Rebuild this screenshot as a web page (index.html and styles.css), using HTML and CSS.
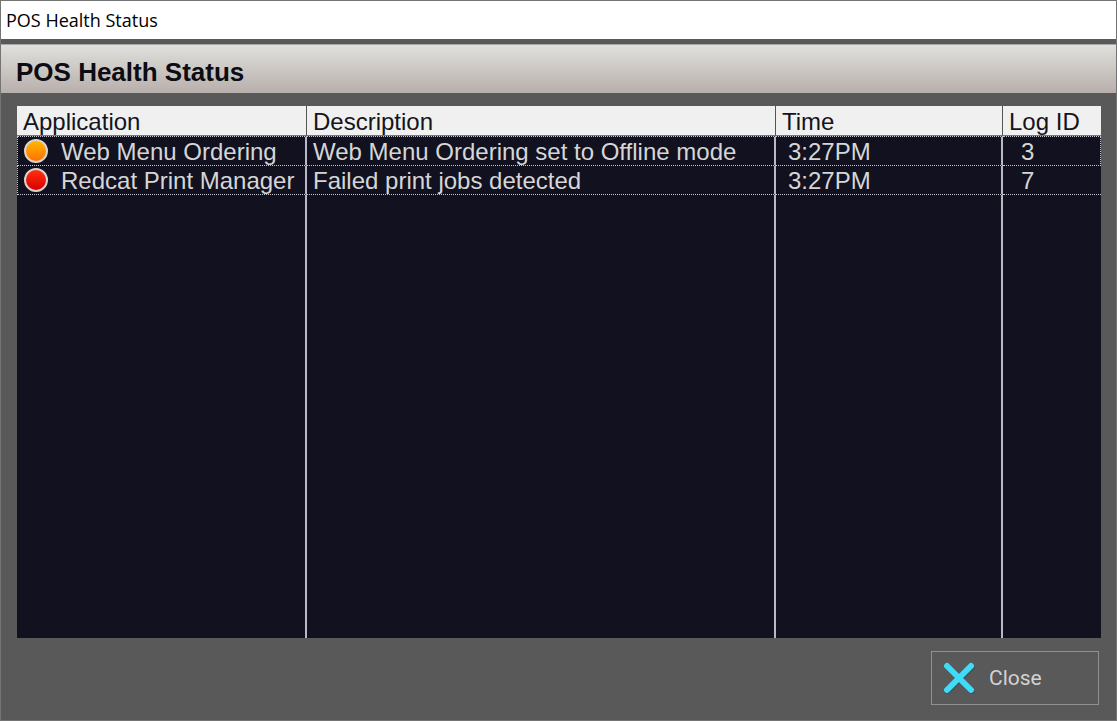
FILE: index.html
```html
<!DOCTYPE html>
<html lang="en">
<head>
  <meta charset="UTF-8">
  <meta name="viewport" content="width=device-width, initial-scale=1.0">
  <title>POS Health Status</title>
  <link rel="stylesheet" href="styles.css">
</head>
<body>
  <div class="window">
    <div class="titlebar">POS Health Status</div>
    <h1 class="heading">POS Health Status</h1>
    <div class="content">
      <table class="log">
        <colgroup>
          <col class="col-app">
          <col class="col-desc">
          <col class="col-time">
          <col class="col-id">
        </colgroup>
        <thead>
          <tr>
            <th scope="col">Application</th>
            <th scope="col">Description</th>
            <th scope="col">Time</th>
            <th scope="col">Log ID</th>
          </tr>
        </thead>
        <tbody>
          <tr class="entry">
            <td><span class="light warning"></span>Web Menu Ordering</td>
            <td>Web Menu Ordering set to Offline mode</td>
            <td class="time">3:27PM</td>
            <td class="log-id">3</td>
          </tr>
          <tr class="entry">
            <td><span class="light error"></span>Redcat Print Manager</td>
            <td>Failed print jobs detected</td>
            <td class="time">3:27PM</td>
            <td class="log-id">7</td>
          </tr>
          <!-- empty row carries the column lines down to the bottom -->
          <tr class="filler">
            <td></td>
            <td></td>
            <td></td>
            <td></td>
          </tr>
        </tbody>
      </table>
    </div>
    <div class="footer">
      <button class="close" type="button">
        <svg width="32" height="32" viewBox="0 0 32 32" aria-hidden="true">
          <path class="cross-shadow" d="M4.5 5L28.5 29M28.5 5L4.5 29"/>
          <path class="cross" d="M4 4L28 28M28 4L4 28"/>
        </svg>
        Close
      </button>
    </div>
  </div>
</body>
</html>
```
FILE: styles.css
```css
* {
  box-sizing: border-box;
}
body {
  margin: 0;
  font-family: "Liberation Sans", Arial, sans-serif;
}
.window {
  display: flex;
  flex-direction: column;
  min-height: 100vh;
  border: 1px solid #747474;
  background-color: #595959;
}
.titlebar {
  height: 38px;
  padding-left: 5px;
  background-color: #fff;
  color: #000;
  font-family: "Open Sans", "Noto Sans", sans-serif;
  font-size: 18px;
  line-height: 38px;
}
.heading {
  height: 49px;
  margin: 5px 0 0;
  padding-left: 15px;
  border-top: 1px solid #a8a8a6;
  background: linear-gradient(#e1e0dc, #b7afab);
  color: #0c0c12;
  font-size: 26px;
  line-height: 54px;
}
.content {
  flex: 1;
  display: grid;
  padding: 13px 15px 0 16px;
}
.log {
  width: 100%;
  height: 100%;
  table-layout: fixed;
  border-collapse: separate;
  border-spacing: 0;
  background-color: #12111f;
  color: #d6d6d6;
  font-size: 24px;
  line-height: 26px;
}
.col-app {
  width: 290px;
}
.col-time {
  width: 227px;
}
.col-id {
  width: 98px;
}
.log th {
  height: 30px;
  padding: 2px 0 0 6px;
  border-right: 1px solid #555;
  border-bottom: 1px solid #777;
  background-color: #f0f0f0;
  color: #14141c;
  font-weight: normal;
  line-height: 27px;
  text-align: left;
}
.log td {
  padding: 2px 0 0 6px;
  border-right: 2px solid #b9b9c3;
  white-space: nowrap;
}
.log th:last-child,
.log td:last-child {
  border-right: 0;
}
.entry {
  height: 29px;
}
.entry td {
  border-bottom: 1px dotted #c6c6ce;
}
.entry:first-child td {
  border-top: 1px dotted #c6c6ce;
}
.entry td:first-child {
  border-left: 1px dotted #c6c6ce;
}
.log .entry:first-child td:last-child {
  border-right: 1px dotted #c6c6ce;
}
.log .time {
  padding-left: 12px;
}
.log .log-id {
  padding-left: 18px;
}
.light {
  display: inline-block;
  width: 24px;
  height: 24px;
  margin-right: 13px;
  border: 2px solid #dcd3cc;
  border-radius: 50%;
  vertical-align: top;
}
.warning {
  background: linear-gradient(#ffb800, #ff7200);
}
.error {
  background: linear-gradient(#ff3010, #d80000);
}
.footer {
  display: flex;
  justify-content: flex-end;
  padding: 13px 17px 15px;
}
.close {
  display: flex;
  align-items: center;
  gap: 14px;
  width: 168px;
  height: 54px;
  padding: 0 11px;
  border: 1px solid #919191;
  background-color: #595959;
  color: #d2d2d2;
  font-family: Roboto, sans-serif;
  font-size: 21px;
}
.close:hover {
  background-color: #666;
}
.cross,
.cross-shadow {
  fill: none;
  stroke: #3fdcfa;
  stroke-width: 6;
  stroke-linecap: round;
}
.cross-shadow {
  stroke: #3f4c50;
}
```
